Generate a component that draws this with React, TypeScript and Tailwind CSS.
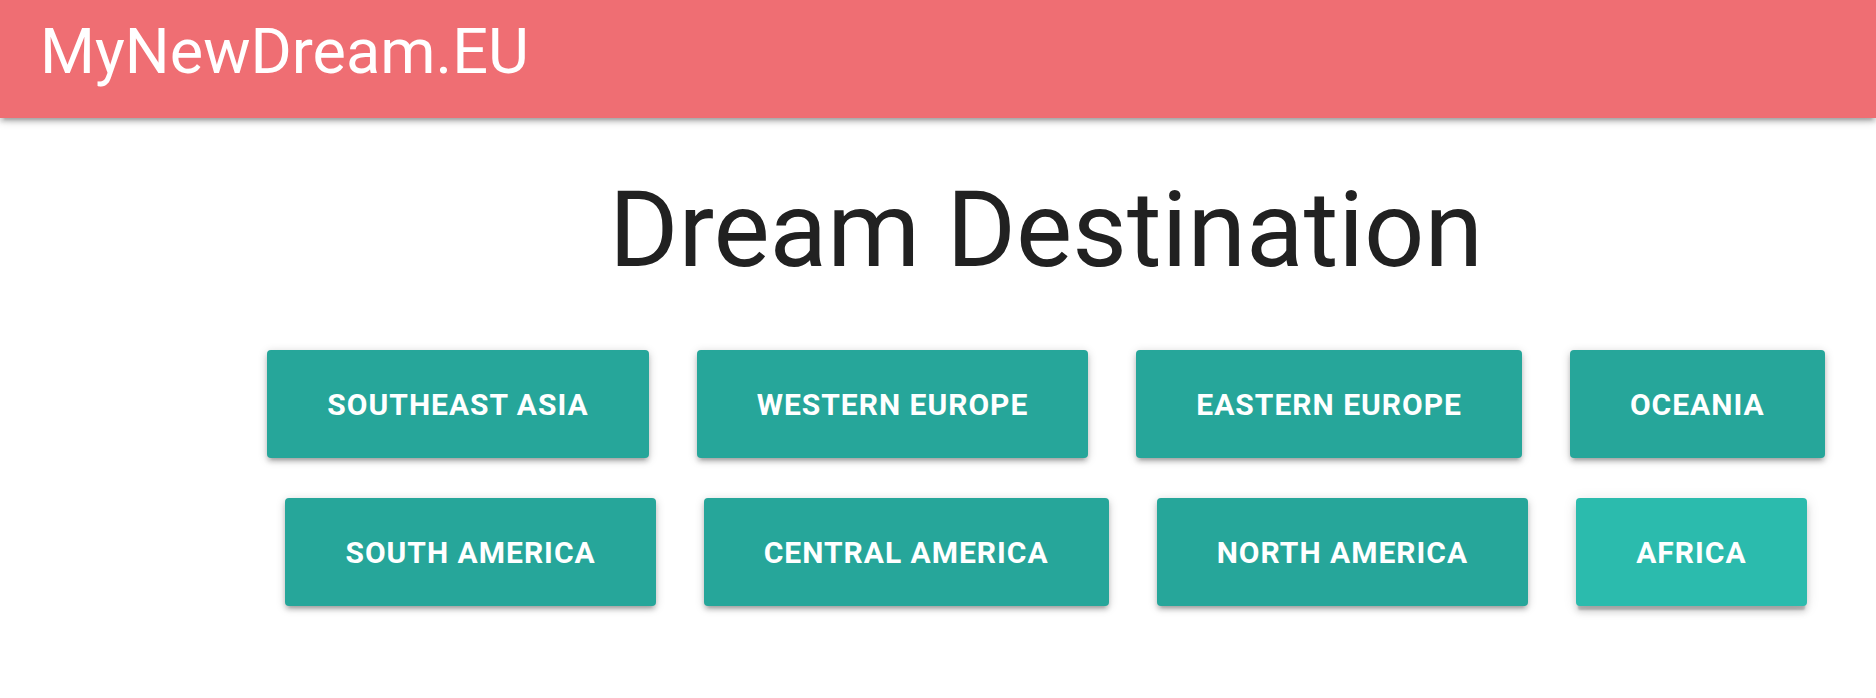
import React from 'react';

const regions = [
  'Southeast Asia',
  'Western Europe',
  'Eastern Europe',
  'Oceania',
  'South America',
  'Central America',
  'North America',
  'Africa',
];

export default function App() {
  return (
    <div className="min-h-screen bg-white font-['Roboto',sans-serif]">
      {/* Yläpalkki */}
      <header className="relative z-10 h-[118px] bg-[#ef6e73] pl-[40px] pt-[20px] shadow-[0_4px_4px_0_rgba(0,0,0,0.14),0_6px_2px_-4px_rgba(0,0,0,0.12),0_2px_10px_0_rgba(0,0,0,0.2)]">
        <span className="text-[63px] leading-none text-white">MyNewDream.EU</span>
      </header>

      <main className="ml-[216px]">
        <h1 className="mt-[59px] text-center text-[106px] font-normal leading-none text-[#212121]">
          Dream Destination
        </h1>

        {/* Alueet */}
        <div className="mt-[67px] flex flex-wrap justify-center gap-x-[48px] gap-y-[40px]">
          {regions.map((r) => {
            const hovered = r === 'Africa';
            return (
              <button
                key={r}
                className={
                  hovered
                    ? 'h-[108px] rounded-[4px] bg-[#2bbbad] px-[60px] text-[30px] font-bold uppercase tracking-[1px] text-white shadow-[0_6px_6px_0_rgba(0,0,0,0.14),0_2px_14px_0_rgba(0,0,0,0.12),0_6px_2px_-2px_rgba(0,0,0,0.2)]'
                    : 'h-[108px] rounded-[4px] bg-[#26a69a] px-[60px] text-[30px] font-bold uppercase tracking-[1px] text-white shadow-[0_4px_4px_0_rgba(0,0,0,0.14),0_6px_2px_-4px_rgba(0,0,0,0.12),0_2px_10px_0_rgba(0,0,0,0.2)]'
                }
              >
                {r}
              </button>
            );
          })}
        </div>
      </main>
    </div>
  );
}
